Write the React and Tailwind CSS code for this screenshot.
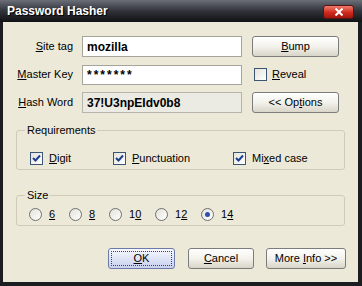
import React, { useState } from "react";

const Btn = ({ children, className = "", primary = false }) => (
  <button
    className={`h-[21px] rounded-[3px] border text-[11px] leading-none text-black ${
      primary
        ? "border-[#6b7aa8] bg-gradient-to-b from-[#f7f8fe] to-[#c8d0ee] p-[2px]"
        : "border-[#7c7c7c] bg-gradient-to-b from-[#ffffff] via-[#f3f2ec] to-[#d8d5c8]"
    } ${className}`}
  >
    {primary ? (
      <span className="flex h-full w-full items-center justify-center border border-dotted border-[#444]">
        {children}
      </span>
    ) : (
      children
    )}
  </button>
);

const Check = ({ checked }) => (
  <span className="flex h-[13px] w-[13px] shrink-0 items-center justify-center border border-[#3b5574] bg-gradient-to-br from-[#e4e3dc] to-[#ffffff]">
    {checked && (
      <svg width="9" height="9" viewBox="0 0 9 9">
        <path d="M1 4 L3.5 6.5 L8 1.5" fill="none" stroke="#1f3f95" strokeWidth="2" />
      </svg>
    )}
  </span>
);

const Radio = ({ checked }) => (
  <span className="flex h-[13px] w-[13px] shrink-0 items-center justify-center rounded-full border border-[#6f6f6f] bg-gradient-to-br from-[#e2e1da] to-[#ffffff]">
    {checked && <span className="h-[5px] w-[5px] rounded-full bg-[#2d4fb0]" />}
  </span>
);

const Group = ({ label, className = "", children }) => (
  <div className={`relative mx-[13px] rounded-[3px] border border-[#cfcbb8] ${className}`}>
    <span className="absolute -top-[8px] left-[8px] bg-[#ece9d8] px-[2px] leading-[14px]">
      {label}
    </span>
    {children}
  </div>
);

export default function App() {
  const [size] = useState(14);
  const sizes = [
    { n: 6, label: <u>6</u>, w: "w-[40px]" },
    { n: 8, label: <u>8</u>, w: "w-[40px]" },
    { n: 10, label: <>1<u>0</u></>, w: "w-[46px]" },
    { n: 12, label: <>1<u>2</u></>, w: "w-[46px]" },
    { n: 14, label: <>1<u>4</u></>, w: "w-[46px]" },
  ];

  return (
    <div className="flex h-[286px] w-[362px] flex-col bg-[#1c1d21] font-['Liberation_Sans',Arial,sans-serif] text-[11px] text-black">
      {/* title bar */}
      <div className="flex h-[22px] shrink-0 items-center justify-between bg-gradient-to-b from-[#6b6f78] via-[#30333a] to-[#111214] pl-[7px] pr-[8px]">
        <span className="text-[12px] font-bold text-white [text-shadow:1px_1px_1px_#000]">
          Password Hasher
        </span>
        <span className="mt-[1px] flex h-[14px] w-[31px] items-center justify-center rounded-[3px] border border-[#5a1410] bg-gradient-to-b from-[#ee7a6c] via-[#d32c1f] to-[#a4150c]">
          <svg width="10" height="8" viewBox="0 0 10 8">
            <path d="M1.5 0.5 L8.5 7.5 M8.5 0.5 L1.5 7.5" stroke="#fff" strokeWidth="2" />
          </svg>
        </span>
      </div>

      {/* client area */}
      <div className="mb-[4px] ml-[3px] mr-[4px] flex flex-1 flex-col bg-[#ece9d8] pt-[14px]">
        <div className="flex flex-col gap-[7px]">
          <div className="flex h-[21px] items-center">
            <span className="w-[70px] text-right">
              <u>S</u>ite tag
            </span>
            <div className="ml-[9px] flex h-[21px] w-[160px] items-center border border-[#a5a59c] bg-white pl-[4px] text-[12px] font-bold">
              mozilla
            </div>
            <Btn className="ml-[10px] w-[87px]">
              <u>B</u>ump
            </Btn>
          </div>
          <div className="flex h-[21px] items-center">
            <span className="w-[70px] text-right">
              <u>M</u>aster Key
            </span>
            <div className="ml-[9px] flex h-[20px] w-[160px] items-center border border-[#a5a59c] bg-white pl-[4px] text-[12px] font-bold tracking-[2px]">
              *******
            </div>
            <div className="ml-[12px] flex items-center gap-[5px]">
              <Check />
              <span>
                <u>R</u>eveal
              </span>
            </div>
          </div>
          <div className="flex h-[21px] items-center">
            <span className="w-[70px] text-right">
              <u>H</u>ash Word
            </span>
            <div className="ml-[9px] flex h-[21px] w-[160px] items-center border border-[#b5b5ab] bg-[#ebeae3] pl-[4px] text-[12px] font-bold">
              37!U3npEIdv0b8
            </div>
            <Btn className="ml-[10px] w-[87px]">
              &lt;&lt; Op<u>t</u>ions
            </Btn>
          </div>
        </div>

        <Group label="Requirements" className="mt-[17px] h-[40px] pl-[13px] pt-[19px]">
          <div className="flex items-center">
            <div className="flex w-[83px] items-center gap-[6px]">
              <Check checked />
              <span>
                <u>D</u>igit
              </span>
            </div>
            <div className="flex w-[120px] items-center gap-[6px]">
              <Check checked />
              <span>
                <u>P</u>unctuation
              </span>
            </div>
            <div className="flex items-center gap-[6px]">
              <Check checked />
              <span>
                Mi<u>x</u>ed case
              </span>
            </div>
          </div>
        </Group>

        <Group label="Size" className="mt-[25px] h-[31px] pl-[12px] pt-[10px]">
          <div className="flex items-center">
            {sizes.map((s) => (
              <div key={s.n} className={`flex items-center gap-[7px] ${s.w}`}>
                <Radio checked={s.n === size} />
                <span>{s.label}</span>
              </div>
            ))}
          </div>
        </Group>

        <div className="mt-[22px] flex justify-end pr-[12px]">
          <Btn primary className="w-[67px]">
            <u>O</u>K
          </Btn>
          <Btn className="ml-[13px] w-[66px]">
            <u>C</u>ancel
          </Btn>
          <Btn className="ml-[12px] w-[80px]">
            More <u>I</u>nfo &gt;&gt;
          </Btn>
        </div>
      </div>
    </div>
  );
}
